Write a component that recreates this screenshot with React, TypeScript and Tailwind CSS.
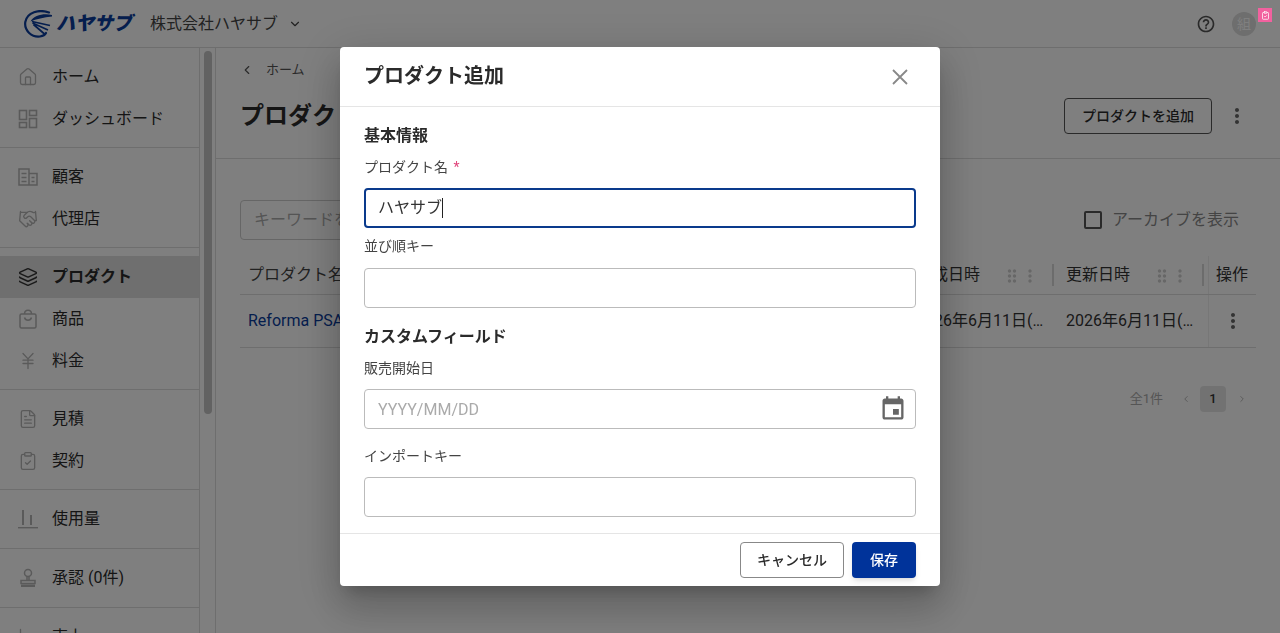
import React from 'react';
import { Home, Handshake, Layers, JapaneseYen, FileText, ClipboardCheck, ChevronDown, ChevronLeft, ChevronRight, LineChart } from 'lucide-react';

const MoreVert: React.FC<{ className?: string }> = ({ className }) => (
  <svg viewBox="0 0 24 24" fill="currentColor" className={className}>
    <path d="M12 8c1.1 0 2-.9 2-2s-.9-2-2-2-2 .9-2 2 .9 2 2 2zm0 2c-1.1 0-2 .9-2 2s.9 2 2 2 2-.9 2-2-.9-2-2-2zm0 6c-1.1 0-2 .9-2 2s.9 2 2 2 2-.9 2-2-.9-2-2-2z" />
  </svg>
);

const DragDots: React.FC = () => (
  <svg viewBox="0 0 24 24" fill="currentColor" className="w-5 h-5 text-[#cfcfcf]">
    <path d="M11 18c0 1.1-.9 2-2 2s-2-.9-2-2 .9-2 2-2 2 .9 2 2zm-2-8c-1.1 0-2 .9-2 2s.9 2 2 2 2-.9 2-2-.9-2-2-2zm0-6c-1.1 0-2 .9-2 2s.9 2 2 2 2-.9 2-2-.9-2-2-2zm6 4c1.1 0 2-.9 2-2s-.9-2-2-2-2 .9-2 2 .9 2 2 2zm0 2c-1.1 0-2 .9-2 2s.9 2 2 2 2-.9 2-2-.9-2-2-2zm0 6c-1.1 0-2 .9-2 2s.9 2 2 2 2-.9 2-2-.9-2-2-2z" />
  </svg>
);

const DashIcon = () => (
  <svg viewBox="0 0 20 20" fill="none" stroke="currentColor" strokeWidth="1.6" className="w-5 h-5">
    <rect x="1.5" y="1.5" width="7" height="9" />
    <rect x="11.5" y="1.5" width="7" height="5" />
    <rect x="1.5" y="13.5" width="7" height="5" />
    <rect x="11.5" y="9.5" width="7" height="9" />
  </svg>
);

const BuildingIcon = () => (
  <svg viewBox="0 0 20 20" fill="none" stroke="currentColor" strokeWidth="1.5" className="w-5 h-5">
    <path d="M1 2h10v16H1zM11 6.5h8V18h-8z" />
    <path d="M3.5 6.5h5M3.5 10.5h5M3.5 14.5h5M13.5 10.5h3M13.5 14.5h3" />
  </svg>
);

const BagIcon = () => (
  <svg viewBox="0 0 20 20" fill="none" stroke="currentColor" strokeWidth="1.5" className="w-5 h-5">
    <rect x="2" y="5" width="16" height="14" rx="1.5" />
    <path d="M6.5 5C6.5 0 13.5 0 13.5 5" />
    <path d="M6.5 8.5C7.5 12 12.5 12 13.5 8.5" />
  </svg>
);

const StampIcon = () => (
  <svg viewBox="0 0 20 20" fill="none" stroke="currentColor" strokeWidth="1.5" className="w-5 h-5">
    <circle cx="10" cy="5" r="3.5" />
    <path d="M9 8.5V12M11 8.5V12" />
    <path d="M3 12.5h14v3H3z" />
    <rect x="3" y="16.5" width="14" height="2.5" fill="currentColor" stroke="none" />
  </svg>
);

const BarsIcon = () => (
  <svg viewBox="0 0 20 20" fill="currentColor" className="w-5 h-5">
    <rect x="4" y="1" width="2" height="15" />
    <rect x="12" y="6" width="2" height="10" />
    <rect x="0" y="18" width="20" height="1.4" />
  </svg>
);

const NavItem: React.FC<{ icon: React.ReactNode; label: string; active?: boolean }> = ({ icon, label, active }) => (
  <div className={`flex items-center h-[42px] pl-[18px] ${active ? 'bg-[#dedede] font-bold' : ''}`}>
    <span className={`w-5 h-5 flex items-center justify-center ${active ? 'text-[#333333]' : 'text-[#b4b4b4]'}`}>{icon}</span>
    <span className="ml-[14px] text-base text-[#2b2b2b] whitespace-nowrap">{label}</span>
  </div>
);

const NavGroup: React.FC<{ single?: boolean; children?: React.ReactNode }> = ({ single, children }) => (
  <div className={`pt-2 border-b border-[#dddddd] ${single ? 'pb-2' : 'pb-[7px]'}`}>{children}</div>
);

const Label: React.FC<{ children?: React.ReactNode }> = ({ children }) => (
  <div className="text-sm leading-5 text-[#444444]">{children}</div>
);

const HeadCell: React.FC<{ label: string }> = ({ label }) => (
  <div className="w-[150px] h-full flex items-center pl-2 relative">
    <span className="text-base text-[#333333] whitespace-nowrap">{label}</span>
    <span className="absolute right-[36px] top-[10px]"><DragDots /></span>
    <MoreVert className="absolute right-[18px] top-[10px] w-5 h-5 text-[#cfcfcf]" />
    <span className="absolute right-1 top-2 bottom-2 w-[2px] bg-[#d8d8d8]" />
  </div>
);

export default function App() {
  return (
    <div className="relative h-screen overflow-hidden bg-white font-['Roboto','Noto_Sans_CJK_JP',sans-serif] text-[#333333]">
      {/* ヘッダー */}
      <header className="h-[48px] flex items-center border-b border-[#dddddd] pl-6 pr-2">
        <svg viewBox="0 0 28 28" fill="none" className="w-7 h-7 text-[#0a3c9c]">
          <path d="M25 2.5C15 -1 3 2 1.3 12C0 21 8 27.5 16 26.5C19 26 21 25 22 23" stroke="currentColor" strokeWidth="2.2" strokeLinecap="round" />
          <path d="M28 5C20 3 10 5 6.5 11.5C12 9 20 7.5 28 6.5Z" fill="currentColor" />
          <path d="M8 11.5L26 15.5M8.5 13L24 20M9.5 14.5L20.5 24" stroke="currentColor" strokeWidth="1.7" />
        </svg>
        <span className="ml-1 w-[81px] text-[19px] leading-none font-black italic text-[#0a3c9c] whitespace-nowrap">ハヤサブ</span>
        <span className="ml-[13px] text-base text-[#444444] whitespace-nowrap">株式会社ハヤサブ</span>
        <ChevronDown size={14} className="ml-[10px] text-[#444444]" />
        <div className="flex-1" />
        <svg viewBox="0 0 24 24" fill="currentColor" className="w-5 h-5 text-[#555555]">
          <path d="M11 18h2v-2h-2v2zm1-16C6.48 2 2 6.48 2 12s4.48 10 10 10 10-4.48 10-10S17.52 2 12 2zm0 18c-4.41 0-8-3.59-8-8s3.59-8 8-8 8 3.59 8 8-3.59 8-8 8zm0-14c-2.21 0-4 1.79-4 4h2c0-1.1.9-2 2-2s2 .9 2 2c0 2-3 1.75-3 5h2c0-2.25 3-2.5 3-5 0-2.21-1.79-4-4-4z" />
        </svg>
        <div className="ml-4 mr-4 w-6 h-6 rounded-full bg-[#dcdcdc] flex items-center justify-center text-sm text-white">組</div>
      </header>

      <div className="flex h-[585px]">
        {/* サイドバー */}
        <aside className="w-[200px] shrink-0 border-r border-[#dddddd] overflow-hidden">
          <NavGroup>
            <NavItem icon={<Home size={20} strokeWidth={1.6} />} label="ホーム" />
            <NavItem icon={<DashIcon />} label="ダッシュボード" />
          </NavGroup>
          <NavGroup>
            <NavItem icon={<BuildingIcon />} label="顧客" />
            <NavItem icon={<Handshake size={20} strokeWidth={1.6} />} label="代理店" />
          </NavGroup>
          <NavGroup>
            <NavItem active icon={<Layers size={20} strokeWidth={1.8} />} label="プロダクト" />
            <NavItem icon={<BagIcon />} label="商品" />
            <NavItem icon={<JapaneseYen size={20} strokeWidth={1.6} />} label="料金" />
          </NavGroup>
          <NavGroup>
            <NavItem icon={<FileText size={20} strokeWidth={1.6} />} label="見積" />
            <NavItem icon={<ClipboardCheck size={20} strokeWidth={1.6} />} label="契約" />
          </NavGroup>
          <NavGroup single>
            <NavItem icon={<BarsIcon />} label="使用量" />
          </NavGroup>
          <NavGroup single>
            <NavItem icon={<StampIcon />} label="承認 (0件)" />
          </NavGroup>
          <NavGroup single>
            <NavItem icon={<LineChart size={20} strokeWidth={1.6} />} label="売上" />
          </NavGroup>
        </aside>

        {/* スクロールバー */}
        <div className="w-[16px] shrink-0 border-r border-[#dddddd] px-1 pt-[3px]">
          <div className="w-2 h-[363px] rounded-full bg-[#c4c4c4]" />
        </div>

        {/* メイン */}
        <main className="flex-1 min-w-0">
          <div className="h-[111px] border-b border-[#dddddd] px-6">
            <div className="flex items-center h-[43px] mb-[7px] text-[13px] text-[#555555]">
              <ChevronLeft size={14} />
              <span className="ml-3">ホーム</span>
            </div>
            <div className="flex items-center justify-between">
              <h1 className="text-2xl font-bold text-[#2b2b2b]">プロダクト</h1>
              <div className="flex items-center">
                <button className="w-[148px] h-9 border border-[#555555] rounded text-sm font-medium text-[#2b2b2b]">プロダクトを追加</button>
                <MoreVert className="ml-[13px] mr-[7px] w-6 h-6 text-[#666666]" />
              </div>
            </div>
          </div>

          <div className="px-6">
            <div className="flex items-center justify-between mt-[41px] h-[40px]">
              <div className="w-[400px] h-full border border-[#cccccc] rounded px-[13px] flex items-center text-base text-[#aaaaaa]">キーワードを入力</div>
              <div className="flex items-center mr-[17px]">
                <span className="w-[18px] h-[18px] border-2 border-[#555555] rounded-[2px]" />
                <span className="ml-[10px] text-base text-[#888888]">アーカイブを表示</span>
              </div>
            </div>

            <div className="flex h-[39px] mt-4 border-b border-[#dddddd]">
              <div className="flex-1 flex items-center pl-2 text-base text-[#444444]">プロダクト名</div>
              <HeadCell label="作成日時" />
              <HeadCell label="更新日時" />
              <div className="w-[48px] flex items-center pl-[7px] text-base text-[#333333] border-l border-[#eeeeee]">操作</div>
            </div>
            <div className="flex h-[53px] border-b border-[#dddddd] items-center">
              <div className="flex-1 pl-2 text-base text-[#0a3c9c]">Reforma PSA</div>
              <div className="w-[150px] pl-2 text-base whitespace-nowrap">2026年6月11日(…</div>
              <div className="w-[150px] pl-2 text-base whitespace-nowrap">2026年6月11日(…</div>
              <div className="w-[48px] h-full flex items-center justify-center border-l border-[#eeeeee]">
                <MoreVert className="w-6 h-6 text-[#666666]" />
              </div>
            </div>

            <div className="flex items-center justify-end mt-[38px] h-[26px] text-[13px] text-[#aaaaaa]">
              <span>全1件</span>
              <ChevronLeft size={10} className="ml-[18px]" />
              <span className="ml-[9px] w-[26px] h-[26px] rounded-sm bg-[#e5e5e5] text-[#333333] flex items-center justify-center font-medium">1</span>
              <ChevronRight size={10} className="ml-[11px] mr-[9px]" />
            </div>
          </div>
        </main>
      </div>

      {/* オーバーレイ */}
      <div className="fixed inset-0 bg-black/50" />

      {/* 通知バッジ */}
      <span className="fixed left-[1258px] top-2 w-[14px] h-[14px] bg-[#f2619f] flex items-center justify-center">
        <ClipboardCheck size={9} className="text-white" />
      </span>

      {/* ダイアログ */}
      <div className="fixed left-[340px] top-[47px] w-[600px] h-[539px] bg-white rounded flex flex-col shadow-[0_11px_15px_-7px_rgba(0,0,0,0.2),0_24px_38px_3px_rgba(0,0,0,0.14),0_9px_46px_8px_rgba(0,0,0,0.12)]">
        <div className="h-[60px] shrink-0 flex items-center justify-between border-b border-[#e5e5e5] pl-6 pr-8">
          <h2 className="pb-[2px] text-xl font-bold text-[#2b2b2b]">プロダクト追加</h2>
          <svg viewBox="0 0 16 16" fill="none" stroke="currentColor" strokeWidth="1.8" className="w-4 h-4 text-[#888888]">
            <path d="M1 1L15 15M15 1L1 15" />
          </svg>
        </div>

        <div className="flex-1 min-h-0 px-6 pt-[17px]">
          <div className="text-base leading-6 font-bold text-[#2b2b2b]">基本情報</div>
          <div className="mt-[9px]"><Label>プロダクト名 <span className="ml-[2px] text-[#e0457b]">*</span></Label></div>
          <div className="mt-[11px] h-10 border-2 border-[#0a3a8c] rounded flex items-center px-3 text-base text-[#333333]">
            ハヤサブ<span className="w-px h-5 bg-[#222222]" />
          </div>
          <div className="mt-2"><Label>並び順キー</Label></div>
          <div className="mt-3 h-10 border border-[#bbbbbb] rounded" />
          <div className="mt-[17px] text-base leading-6 font-bold text-[#2b2b2b]">カスタムフィールド</div>
          <div className="mt-[9px]"><Label>販売開始日</Label></div>
          <div className="mt-[11px] h-10 border border-[#bbbbbb] rounded flex items-center justify-between pl-[13px] pr-2 text-base text-[#aaaaaa]">
            <span className="pt-[2px]">YYYY/MM/DD</span>
            <svg viewBox="0 0 24 24" fill="currentColor" className="w-7 h-7 text-[#666666]">
              <path d="M17 12h-5v5h5v-5zM16 1v2H8V1H6v2H5c-1.11 0-1.99.9-1.99 2L3 19c0 1.1.89 2 2 2h14c1.1 0 2-.9 2-2V5c0-1.1-.9-2-2-2h-1V1h-2zm3 18H5V8h14v11z" />
            </svg>
          </div>
          <div className="mt-[17px]"><Label>インポートキー</Label></div>
          <div className="mt-[11px] h-10 border border-[#bbbbbb] rounded" />
        </div>

        <div className="h-[53px] shrink-0 flex items-center justify-end gap-2 border-t border-[#e5e5e5] px-6">
          <button className="w-[104px] h-9 border border-[#888888] rounded text-sm font-medium text-[#2b2b2b]">キャンセル</button>
          <button className="w-16 h-9 bg-[#00339a] rounded text-sm font-medium text-white shadow-md">保存</button>
        </div>
      </div>
    </div>
  );
}
